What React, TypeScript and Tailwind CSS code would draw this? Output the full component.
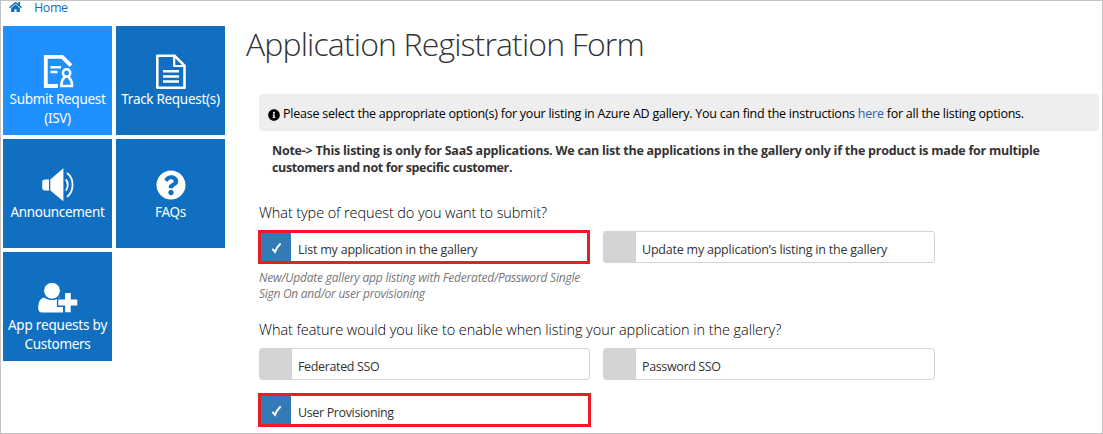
import type { ReactNode } from "react";
import { FaHome, FaInfoCircle, FaQuestionCircle } from "react-icons/fa";

function SubmitIcon() {
  return (
    <svg width="32" height="36" viewBox="0 0 32 36" fill="none">
      <path d="M16 32H3.8V2.8H20.2L29 11.6" stroke="white" strokeWidth="3.8" />
      <path d="M8.5 13.3H19M8.5 18H15.5" stroke="white" strokeWidth="2.4" />
      <circle cx="24.6" cy="19" r="3.7" stroke="white" strokeWidth="2.5" />
      <path d="M22.6 22.5L21.4 24.8C19.4 26.4 19.4 28.6 19.4 32H30C30 28.6 29.8 26.4 27.8 24.8L26.6 22.5" stroke="white" strokeWidth="2.7" />
    </svg>
  );
}

function DocumentIcon() {
  return (
    <svg width="32" height="36" viewBox="0 0 32 36" fill="none" stroke="white">
      <path d="M3 1.8H19.5L29.5 11.6V33.8H2.3V1.8H3Z" strokeWidth="2.6" strokeLinejoin="round" />
      <path d="M19.2 2V12H29.5" strokeWidth="2.2" />
      <path d="M8 17.2H24M8 22.4H24M8 27.6H24" strokeWidth="2.5" />
    </svg>
  );
}

function SpeakerIcon() {
  return (
    <svg width="34" height="36" viewBox="0 0 34 36" fill="none">
      <path d="M4 12.6H8V23.4H4Q1.2 23.4 1.2 20.6V15.4Q1.2 12.6 4 12.6Z" fill="white" />
      <path d="M9.3 12.4L22.4 1.2V34.2L9.3 23.6Z" fill="white" />
      <path d="M24.8 12.4C27.4 15.4 27.4 20.6 24.8 23.6" stroke="white" strokeWidth="1.8" />
      <path d="M26 6C33.4 11.6 33.4 24.2 26 29.8" stroke="white" strokeWidth="1.8" />
    </svg>
  );
}

function AddUserIcon() {
  return (
    <svg width="42" height="36" viewBox="0 0 42 36">
      <path d="M7 17.5C9 19 11.5 20 14.8 20C18 20 20.5 19 22.2 17.4L26 19V32.6H5.2Q1.2 32.6 1.2 28C1.2 22.5 3 18.3 7 17.5Z" fill="white" />
      <circle cx="15" cy="10.8" r="8.4" fill="white" stroke="#106fc0" strokeWidth="1" />
      <path d="M27.4 12.2H34.4V18.8H41V26.2H34.4V32.9H27.4V26.2H20.6V18.8H27.4Z" fill="white" stroke="#106fc0" strokeWidth="1.4" />
    </svg>
  );
}

function Tile({ icon, children, active }: { icon: ReactNode; children: ReactNode; active?: boolean }) {
  return (
    <a className={`flex h-[109px] flex-col items-center pt-[27px] text-center text-[13.5px] leading-[19px] tracking-[-0.3px] text-white ${active ? "bg-[#1e90ff]" : "bg-[#106fc0]"}`}>
      <span className="flex h-[37px] items-center justify-center">{icon}</span>
      <span>{children}</span>
    </a>
  );
}

function Option({ label, checked }: { label: string; checked?: boolean }) {
  return checked ? (
    <div className="-ml-px flex h-[34px] border-3 border-[#ed1c24]">
      <span className="flex w-[30px] items-center justify-center bg-[#337ab7] pt-px pl-px">
        <svg width="12" height="12" viewBox="0 0 12 12" fill="none">
          <path d="M1.4 6.8L4 9.8Q6 5 9.6 1.6" stroke="white" strokeWidth="2" />
        </svg>
      </span>
      <span className="pt-[7px] pl-[7px] leading-5">{label}</span>
    </div>
  ) : (
    <div className="flex h-8 overflow-hidden rounded-[3px] border border-[#d1d3d4]">
      <span className="w-8 bg-[#d1d3d4]" />
      <span className="pt-[8px] pl-[6px] leading-5">{label}</span>
    </div>
  );
}

export default function App() {
  return (
    <div className="flex h-[434px] w-[1103px] flex-col overflow-hidden border border-[#c3c3c3] bg-white font-['Open_Sans','Noto_Sans',sans-serif] text-[12.5px] text-[#333]">
      <nav className="flex h-[25px] items-start pl-[8px] text-[#106ebe]">
        <FaHome className="h-[12px] w-[13px]" />
        <span className="ml-[12px] leading-[13px] tracking-[-0.4px]">Home</span>
      </nav>
      <div className="flex">
        <aside className="ml-[2px] grid w-[222px] shrink-0 grid-cols-2 content-start gap-1 font-['Noto_Sans',sans-serif]">
          <Tile active icon={<SubmitIcon />}>Submit Request<br />(ISV)</Tile>
          <Tile icon={<DocumentIcon />}>Track Request(s)</Tile>
          <Tile icon={<SpeakerIcon />}>Announcement</Tile>
          <Tile icon={<FaQuestionCircle className="size-[30px]" />}>FAQs</Tile>
          <Tile icon={<AddUserIcon />}><span className="tracking-[-0.2px]">App requests by</span><br />Customers</Tile>
        </aside>
        <main className="flex w-[874px] flex-col pl-[21px]">
          <h1 className="h-[68px] text-[32px] leading-[35px] font-light tracking-[-0.86px]">Application Registration Form</h1>
          <div className="ml-[13px] w-[840px]">
            <div className="flex h-[37px] items-center rounded-[4px] bg-[#eee] pt-[4px] pl-[9px] tracking-[-0.235px] text-black">
              <FaInfoCircle className="mr-[3px] size-[12px]" />
              <p className="whitespace-pre">Please select the appropriate option(s) for your listing in Azure AD gallery. You can find the instructions <a className="text-[#2a5db0]">here</a> for all the listing options.</p>
            </div>
            <p className="mt-[11px] pl-[13px] leading-[17px] font-bold tracking-[-0.24px] whitespace-nowrap">
              Note-&gt; This listing is only for SaaS applications. We can list the applications in the gallery only if the product is made for multiple<br />
              <span className="tracking-[-0.37px]">customers and not for specific customer.</span>
            </p>
            <h2 className="mt-[27px] text-[14.5px] leading-5 font-light tracking-[-0.1px] text-black">What type of request do you want to submit?</h2>
            <div className="mt-[7px] grid grid-cols-[331px_332px] gap-x-[13px] tracking-[-0.22px]">
              <div>
                <Option checked label="List my application in the gallery" />
                <p className="mt-[6px] text-[12px] leading-[16px] tracking-[-0.21px] whitespace-nowrap text-[#777] italic">New/Update gallery app listing with Federated/Password Single<br /><span className="tracking-[-0.27px]">Sign On and/or user provisioning</span></p>
              </div>
              <div className="pt-px"><Option label="Update my application’s listing in the gallery" /></div>
            </div>
            <h2 className="mt-[18px] text-[14.5px] leading-5 font-light tracking-[-0.06px] text-black">What feature would you like to enable when listing your application in the gallery?</h2>
            <div className="mt-[8px] grid grid-cols-[331px_332px] gap-x-[13px] gap-y-[13px] tracking-[-0.36px]">
              <Option label="Federated SSO" />
              <Option label="Password SSO" />
              <div className="-mr-px"><Option checked label="User Provisioning" /></div>
            </div>
          </div>
        </main>
      </div>
    </div>
  );
}
